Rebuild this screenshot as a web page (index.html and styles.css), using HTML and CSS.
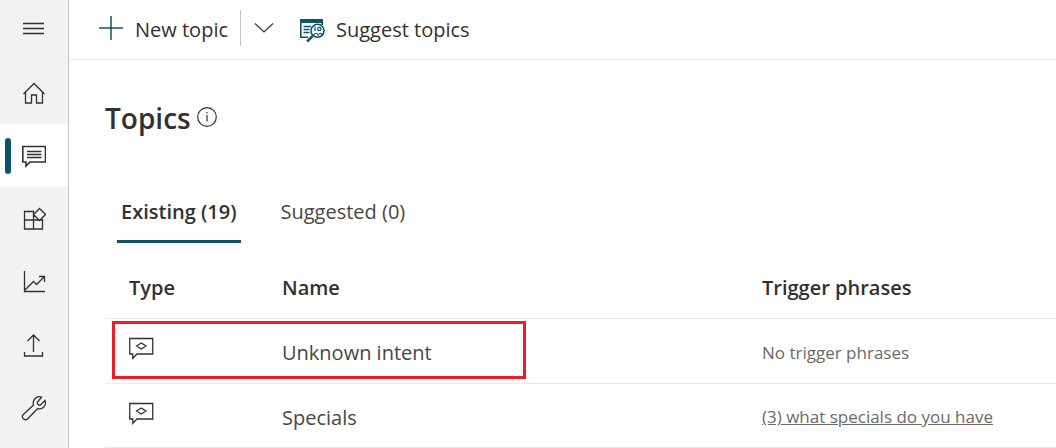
FILE: index.html
```html
<!DOCTYPE html>
<html lang="en">
<head>
<meta charset="utf-8">
<meta name="viewport" content="width=device-width, initial-scale=1">
<title>Topics</title>
<link rel="stylesheet" href="styles.css">
</head>
<body>
<div class="app">
  <nav class="rail" aria-label="Main">
    <button class="rail-item rail-menu" type="button" aria-label="Menu">
      <svg class="icon" width="24" height="24" viewBox="0 0 24 24"><path d="M1 6.500h21M1 11.500h21M1 16.500h21"/></svg>
    </button>
    <a class="rail-item" href="#home" aria-label="Home">
      <svg class="icon" width="24" height="24" viewBox="0 0 24 24"><path d="M1.500 13L12 2.500 22.500 13M3.500 11.500V22h6v-8h5v8h6V11.500"/></svg>
    </a>
    <a class="rail-item rail-active" href="#topics" aria-label="Topics" aria-current="page">
      <svg class="icon icon-strong" width="24" height="24" viewBox="0 0 24 24"><path d="M.800 2.500h22.700v15.500H8l-4 4v-4H.800zM5 7.500h14.500M5 10.500h14.500M5 13.500h14.500"/></svg>
    </a>
    <a class="rail-item" href="#entities" aria-label="Entities">
      <svg class="icon" width="24" height="24" viewBox="0 0 24 24"><path d="M2.500 4.500h9v17.500h-9zM2.500 13h18v9h-18M17.500 1.500l6 6-6 6-6-6z"/></svg>
    </a>
    <a class="rail-item" href="#analytics" aria-label="Analytics">
      <svg class="icon" width="24" height="24" viewBox="0 0 24 24"><path d="M2.500 1v20.500H23M3 20l8.500-8.500 3 3L22 7M17 6.500h5.500V12"/></svg>
    </a>
    <a class="rail-item" href="#publish" aria-label="Publish">
      <svg class="icon" width="24" height="24" viewBox="0 0 24 24"><path d="M2.500 19v4h18v-4M11.500 19V2M5.500 8l6-6 6 6"/></svg>
    </a>
    <a class="rail-item" href="#manage" aria-label="Manage">
      <svg class="icon" width="26" height="26" viewBox="0 0 26 26"><path d="M20.500 2.200C17.500.8 13 2.600 12.300 7c-.2 1 0 2 .2 3L2.400 19.500c-1.500 1.500-1.500 3 0 4.300 1.300 1.300 3 1.200 4.300 0L16.500 13.700c5 1.300 9.300-3 7.500-8.200L19.500 10c-2 .5-3.500-1-3-3z"/></svg>
    </a>
  </nav>

  <div class="main">
    <header class="toolbar">
      <button class="tool tool-new" type="button">
        <svg class="icon-teal" width="26" height="26" viewBox="0 0 26 26"><path d="M1 13h24M13 1v24"/></svg>
        <span>New topic</span>
      </button>
      <button class="tool tool-more" type="button" aria-label="More new topic options">
        <svg class="icon icon-light" width="20" height="12" viewBox="0 0 20 12"><path d="M1 1.500l9 8.500 9-8.500"/></svg>
      </button>
      <button class="tool tool-suggest" type="button">
        <svg class="icon-suggest" width="25" height="24" viewBox="0 0 25 24">
          <path class="solid" d="M0 0h23v4H0z"/>
          <path d="M.800 3v15.200H8M22.200 3v3M3.500 7.500H11M3.500 10.500H9.500M3.500 13.500H9.500"/>
          <path class="thick" d="M12.500 17.200l-5.300 5.300"/>
          <circle cx="17.500" cy="11.800" r="6.500"/>
          <circle class="thin" cx="19.300" cy="10" r="1.700"/>
          <path class="thin" d="M15 7.500v4.500M14 17v-1.500c1-1.700 3-1.700 4 0V17M19 15c1-.9 2-.7 3 .3"/>
        </svg>
        <span>Suggest topics</span>
      </button>
    </header>

    <main class="content">
      <div class="heading">
        <h1>Topics</h1>
        <button class="info" type="button" aria-label="About topics">
          <svg width="20" height="20" viewBox="0 0 20 20"><circle cx="10" cy="10" r="9.300"/><path d="M10 8v6.500M10 5v1.500"/></svg>
        </button>
      </div>

      <div class="tabs" role="tablist">
        <button class="tab tab-active" type="button" role="tab" aria-selected="true">Existing (19)</button>
        <button class="tab" type="button" role="tab" aria-selected="false">Suggested (0)</button>
      </div>

      <table class="topics">
        <colgroup><col class="col-type"><col class="col-name"><col></colgroup>
        <thead>
          <tr><th scope="col">Type</th><th scope="col">Name</th><th scope="col">Trigger phrases</th></tr>
        </thead>
        <tbody>
          <tr>
            <td class="type">
              <svg class="icon" width="25" height="24" viewBox="0 0 25 24"><path d="M.750 1.500h23v15.500H8l-4.200 4.300V17H.750zM7.500 9L12.300 6 17 9l-4.700 3z"/></svg>
              <div class="callout"></div>
            </td>
            <td>Unknown intent</td>
            <td class="phrases">No trigger phrases</td>
          </tr>
          <tr>
            <td class="type">
              <svg class="icon" width="25" height="24" viewBox="0 0 25 24"><path d="M.750 1.500h23v15.500H8l-4.200 4.300V17H.750zM7.500 9L12.300 6 17 9l-4.700 3z"/></svg>
            </td>
            <td>Specials</td>
            <td class="phrases"><a href="#specials">(3) what specials do you have</a></td>
          </tr>
        </tbody>
      </table>
    </main>
  </div>
</div>
</body>
</html>
```
FILE: styles.css
```css
* { box-sizing: border-box; }

body {
  margin: 0;
  background: #fff;
  color: #323130;
  font-family: "Segoe UI", "Open Sans", "Noto Sans", sans-serif;
  font-size: 20px;
  line-height: 28px;
}

button {
  margin: 0;
  padding: 0;
  border: 0;
  background: none;
  color: inherit;
  font: inherit;
  cursor: pointer;
}

svg { display: block; flex: none; fill: none; }

.app { display: flex; min-height: 100vh; }

.rail {
  display: flex;
  flex-direction: column;
  flex: none;
  width: 69px;
  background: #f3f2f1;
  border-right: 1px solid #c8c6c4;
}

.rail-item {
  position: relative;
  display: flex;
  align-items: center;
  justify-content: center;
  height: 63px;
}

.rail-menu { height: 61px; padding-bottom: 4px; }

.rail-active { background: #fff; }

.rail-active::before {
  content: "";
  position: absolute;
  left: 5px;
  top: 14px;
  width: 6px;
  height: 36px;
  border-radius: 3px;
  background: #0b556a;
}

.icon { stroke: #323130; stroke-width: 1.3; }
.icon-strong { stroke-width: 1.6; }
.icon-light { stroke-width: 1.1; }
.icon-teal { stroke: #0b556a; stroke-width: 1.5; }

.icon-suggest { stroke: #0b556a; stroke-width: 1.6; }
.icon-suggest .solid { fill: #0b556a; stroke: none; }
.icon-suggest .thick { stroke-width: 2.6; }
.icon-suggest .thin { stroke-width: 1.2; }

.main { flex: 1; min-width: 0; }

.toolbar {
  display: flex;
  align-items: center;
  height: 60px;
  padding: 0 0 4px 29px;
  border-bottom: 1px solid #edebe9;
}

.tool { display: flex; align-items: center; }
.tool span { padding-top: 4px; }

.tool-new {
  gap: 11px;
  height: 36px;
  padding-right: 12px;
  border-right: 1px solid #c8c6c4;
}

.tool-more { height: 36px; padding: 0 13px; }
.tool-suggest { gap: 11px; margin-left: 13px; }
.tool-suggest svg { margin-top: 6px; }

.content { padding: 39px 0 0 36px; }

.heading { display: flex; align-items: center; gap: 6px; }

h1 {
  margin: 0;
  font-size: 28px;
  font-weight: 600;
  line-height: 38px;
}

.info { padding-bottom: 3px; }
.info svg { stroke: #323130; stroke-width: 1.2; }

.tabs { display: flex; gap: 36px; padding: 46px 0 0 12px; }

.tab {
  height: 60px;
  padding: 0 4px;
  border-bottom: 3px solid transparent;
  color: #484644;
}

.tab-active { border-color: #0b556a; color: #323130; font-weight: 600; }

.topics {
  width: 100%;
  table-layout: fixed;
  border-collapse: separate;
  border-spacing: 0;
}

.col-type { width: 177px; }
.col-name { width: 480px; }

th, td { padding: 0; border-bottom: 1px solid #edebe9; text-align: left; }
th { height: 76px; padding-top: 14px; font-weight: 600; }
td { height: 65px; padding-top: 4px; color: #484644; }
tbody tr:last-child td { height: 64px; }
th:first-child, .type { padding-left: 24px; }

td.type { position: relative; padding-top: 0; padding-bottom: 4px; }

.callout {
  position: absolute;
  z-index: 1;
  left: 7px;
  top: 2px;
  width: 414px;
  height: 58px;
  border: 3px solid #ee1c25;
  pointer-events: none;
}

td.phrases { padding-top: 3px; font-size: 17px; color: #6b6967; }
.phrases a { color: inherit; }
```
